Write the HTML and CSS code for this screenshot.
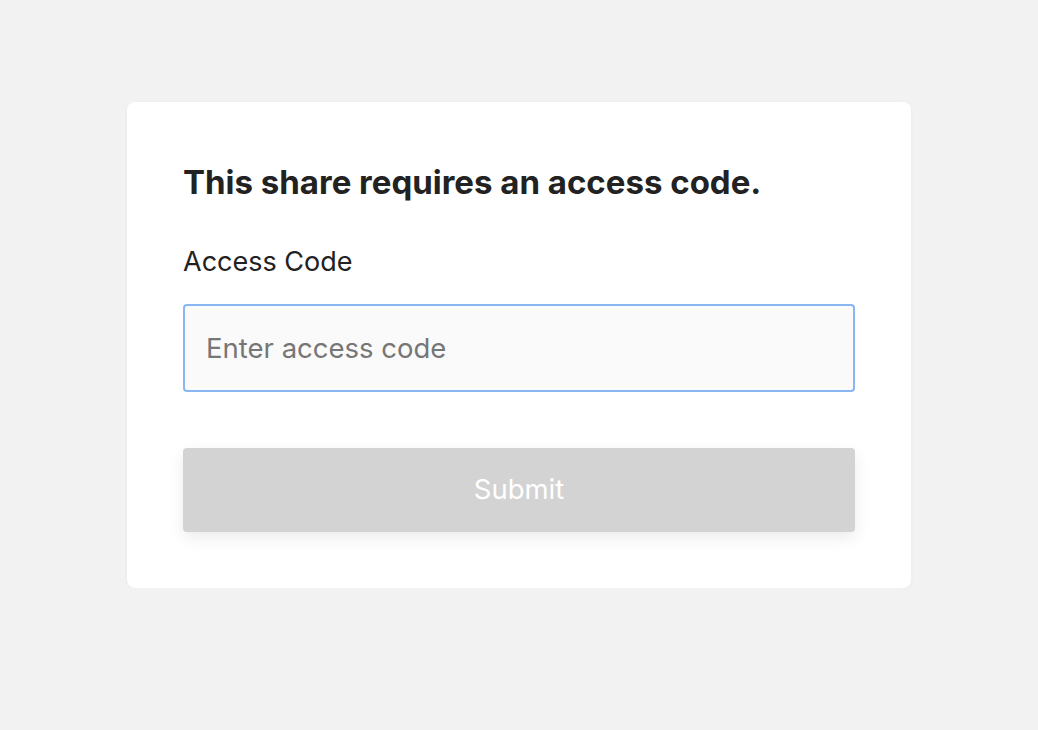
FILE: index.html
```html
<!DOCTYPE html>
<html lang="en">
<head>
    <meta charset="UTF-8">
    <meta name="viewport" content="width=device-width, initial-scale=1.0">
    <title>Access Code Required</title>
    <link rel="stylesheet" href="styles.css">
</head>
<body>
    <div class="card">
        <h1 class="title">This share requires an access code.</h1>
        <form class="access-form" onsubmit="return false;">
            <label class="label" for="code">Access Code</label>
            <input class="code-input" id="code" type="text" placeholder="Enter access code">
            <button class="submit" type="submit" disabled>Submit</button>
        </form>
    </div>
</body>
</html>
```

FILE: styles.css
```css
body {
    background-color: #f2f2f2;
    margin: 0;
    padding-top: 102px;
    font-family: 'Inter', 'Noto Sans', sans-serif;
    color: #222222;
}
.card {
    width: 784px;
    box-sizing: border-box;
    margin: 0 auto;
    padding: 56px;
    background-color: white;
    border-radius: 8px;
    box-shadow: 0 1px 4px rgba(0, 0, 0, 0.04);
}
.title {
    margin: 0;
    font-size: 33px;
    font-weight: 700;
    line-height: 48px;
}
.access-form {
    display: flex;
    flex-direction: column;
}
.label {
    margin-top: 38px;
    font-size: 27px;
    line-height: 36px;
}
.code-input {
    margin-top: 24px;
    height: 88px;
    box-sizing: border-box;
    padding: 0 21px;
    border: 2px solid #8ab6f2;
    border-radius: 4px;
    background-color: #fafafa;
    font-family: inherit;
    font-size: 27.5px;
    color: #222222;
    outline: none;
}
.code-input::placeholder {
    color: #767676;
}
.submit {
    margin-top: 56px;
    height: 84px;
    padding-bottom: 4px;
    border: none;
    border-radius: 4px;
    background-color: #d3d3d3;
    color: white;
    font-family: inherit;
    font-size: 27.5px;
    box-shadow: 0 6px 16px rgba(0, 0, 0, 0.08);
}
```
